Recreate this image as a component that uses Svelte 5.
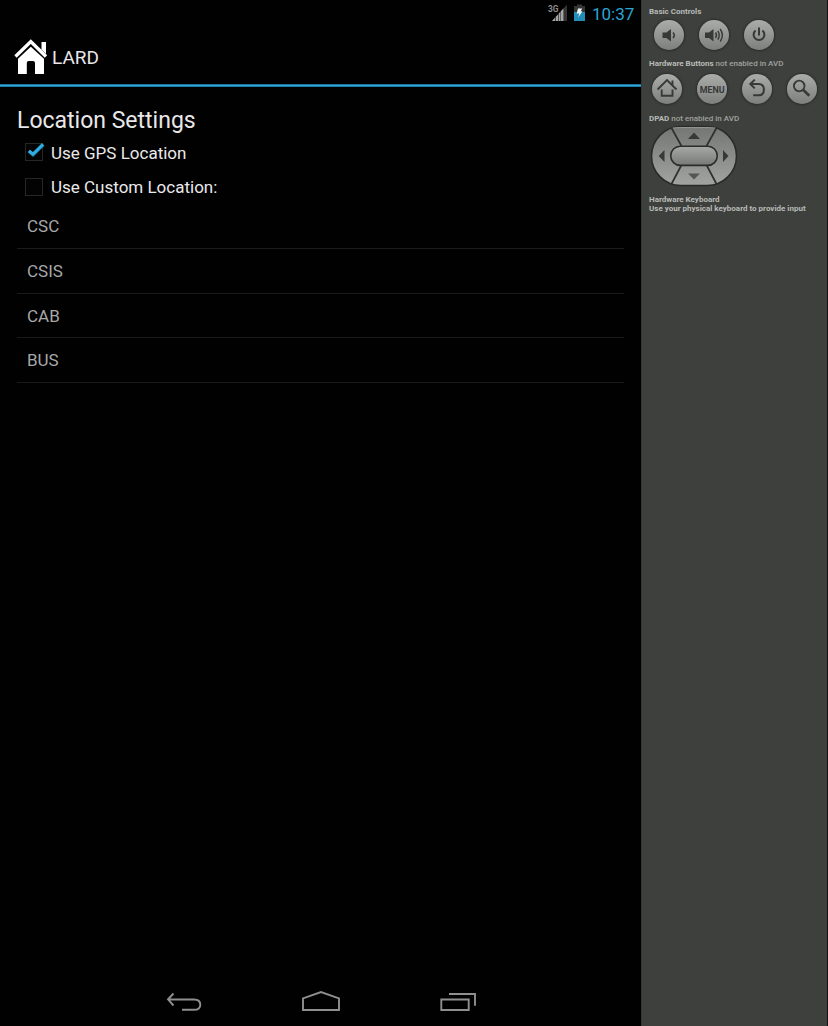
<script>
  const places = ['CSC', 'CSIS', 'CAB', 'BUS'];
  let gps = $state(true);
  let custom = $state(false);
</script>

{#snippet check(on)}
  <svg class="check" width="24" height="24" viewBox="0 0 24 24">
    <rect x="3.5" y="3.5" width="17" height="17" fill="#020302" stroke="#252725" />
    {#if on}
      <path class="glow" d="M6.8 11 L11 14.6 L21.2 4.4" fill="none" stroke="#1583b4" stroke-width="3.6" />
      <path d="M7 10.9 L11 14.2 L21 4.2" fill="none" stroke="#31aee0" stroke-width="2.8" />
    {/if}
  </svg>
{/snippet}

<div class="screen">
  <main class="device">
    <div class="status">
      <svg width="42" height="28" viewBox="0 0 42 28">
        <text class="net" x="1" y="12" textLength="10.5" lengthAdjust="spacingAndGlyphs">3G</text>
        <path d="M5 21 L20 4.5 V21 Z" fill="#343434" />
        <path d="M5 21 L8 17.7 V21 Z M8.8 21 V16.8 L11 14.4 V21 Z M11.8 21 V13.5 L13.2 12 V21 Z M13.8 21 V11.3 L16.4 8.5 V21 Z" fill="#a5a5a5" />
        <path d="M27 6 H30 V4.5 H35 V6 H38 V12 H27 Z" fill="#343634" />
        <path d="M27 12 H38 V21 H27 Z" fill="#238db8" />
        <path d="M31 8.5 H35.2 L33.7 11.2 H35.5 L31.2 17.5 L32.3 13.5 H29.7 Z" fill="#eef5f7" />
      </svg>
      <span class="clock">10:37</span>
    </div>
    <header>
      <svg width="34" height="36" viewBox="0 0 34 36">
        <path d="M27.5 3 H32 V15 L27.5 10.5 Z" fill="#fff" />
        <path d="M1.5 17.5 L16.8 2.6 L32 17.5" fill="none" stroke="#fff" stroke-width="3.4" />
        <path d="M4 35 V19.7 L16.8 7.7 L30 19.7 V35 H21 V24 Q21 22 19 22 H14.8 Q12.8 22 12.8 24 V35 Z" fill="#fff" />
      </svg>
      <span class="title">LARD</span>
    </header>
    <div class="rule"></div>
    <section class="content">
      <h1>Location Settings</h1>
      <button class="option" onclick={() => (gps = !gps)}>{@render check(gps)}<span>Use GPS Location</span></button>
      <button class="option second" onclick={() => (custom = !custom)}>{@render check(custom)}<span>Use Custom Location:</span></button>
      <ul>
        {#each places as place}
          <li>{place}</li>
        {/each}
      </ul>
    </section>
    <nav>
      <svg width="40" height="24" viewBox="0 0 40 24">
        <path d="M9.5 3.5 L4 9.3 L9.5 15.5 M4.5 9.5 H30 Q36.3 9.5 36.3 14.7 Q36.3 19.8 30 19.8 H18" />
      </svg>
      <svg width="40" height="24" viewBox="0 0 40 24">
        <path d="M2 20 V8.3 L20 2 L38 8.3 V20 Z" />
      </svg>
      <svg width="40" height="24" viewBox="0 0 40 24">
        <path d="M3.3 9.5 H30.7 V20 H3.3 Z M11 4 H37 V15.8" />
      </svg>
    </nav>
  </main>

  <aside>
    <div class="label l1"><b>Basic Controls</b></div>
    <div class="keys basic">
      <div class="key"><svg viewBox="0 0 30 30">
        <path d="M8.5 12.5 H12.3 L17 9 V21.5 L12.3 18 H8.5 Z" fill="#373937" />
        <path d="M19 12.5 Q21.5 15.3 19 18" fill="none" stroke="#373937" stroke-width="1.6" />
      </svg></div>
      <div class="key"><svg viewBox="0 0 30 30">
        <path d="M6 12.5 H10 L14.5 9 V21.5 L10 18 H6 Z" fill="#373937" />
        <path d="M16.5 12.5 Q18.5 15.3 16.5 18 M18.8 10.8 Q21.7 15.3 18.8 19.7 M21.2 9 Q25.6 15.3 21.2 21.5" fill="none" stroke="#373937" stroke-width="1.4" />
      </svg></div>
      <div class="key"><svg viewBox="0 0 30 30">
        <path d="M11.6 10.5 A5.4 5.4 0 1 0 18.4 10.5 M15 7.5 V15.5" fill="none" stroke="#373937" stroke-width="2" />
      </svg></div>
    </div>
    <div class="label l2"><b>Hardware Buttons</b> not enabled in AVD</div>
    <div class="keys hardware">
      <div class="key"><svg viewBox="0 0 30 30">
        <path d="M5.6 15.5 L15 6 L24.5 15.5 M20.5 11 V6.5 M9.7 15.5 V21.8 H20.5 V15.5" fill="none" stroke="#373937" stroke-width="1.9" />
      </svg></div>
      <div class="key"><svg viewBox="0 0 30 30"><text class="menu" x="2.7" y="18.6" textLength="25" lengthAdjust="spacingAndGlyphs">MENU</text></svg></div>
      <div class="key"><svg viewBox="0 0 30 30">
        <path d="M12.8 5.6 L8.3 10 L12.8 14.4 M8.8 10 H16.5 Q21.9 10 21.9 15.6 Q21.9 21.3 16.5 21.3 H11.2" fill="none" stroke="#373937" stroke-width="2" />
      </svg></div>
      <div class="key"><svg viewBox="0 0 30 30">
        <circle cx="12.2" cy="12" r="5.3" fill="none" stroke="#373937" stroke-width="1.8" />
        <path d="M15.8 15.5 L22.3 21.8" fill="none" stroke="#373937" stroke-width="2.6" />
      </svg></div>
    </div>
    <div class="label l3"><b>DPAD</b> not enabled in AVD</div>
    <svg class="dpad" width="88" height="62" viewBox="0 0 88 62">
      <defs>
        <linearGradient id="pad" x1="0" y1="0" x2="0" y2="1"><stop offset="0" stop-color="#747674" /><stop offset="1" stop-color="#a2a4a2" /></linearGradient>
        <linearGradient id="mid" x1="0" y1="0" x2="0" y2="1"><stop offset="0" stop-color="#a7a9a7" /><stop offset="1" stop-color="#777977" /></linearGradient>
      </defs>
      <rect x="1.5" y="1.5" width="85" height="59" rx="29.5" fill="url(#pad)" stroke="#292b29" stroke-width="1.6" />
      <path d="M22.5 3 Q26 2.6 30 2.6 H58 Q62 2.6 65.5 3" fill="none" stroke="#a4a6a4" stroke-width=".8" />
      <path d="M21.2 2.5 L31.5 21 M66.8 2.5 L56.5 21 M21.2 59.5 L31.5 40 M66.8 59.5 L56.5 40" stroke="#2f312f" stroke-width="1.7" />
      <rect x="20.7" y="21.2" width="46.6" height="19.2" rx="9.6" fill="url(#mid)" stroke="#2b2d2b" stroke-width="1.6" />
      <path d="M44 7.5 L50 14 H38 Z M8.7 31 L14.5 25 V37 Z M78.5 31 L73 25 V37 Z" fill="#373937" />
      <path d="M38 48.4 H50 L44 54.5 Z" fill="#555755" />
    </svg>
    <div class="label l4"><b>Hardware Keyboard</b></div>
    <div class="label l5"><b>Use your physical keyboard to provide input</b></div>
  </aside>
</div>

<style>
  :global(body) { margin: 0; background: #000; }
  .screen { display: flex; width: 828px; height: 1026px; overflow: hidden; font-family: Roboto, sans-serif; background: #000; }
  svg { display: block; flex: none; }
  .device { width: 641px; display: flex; flex-direction: column; background: #000100; }
  .status { height: 28px; display: flex; justify-content: flex-end; padding-right: 7px; box-sizing: border-box; }
  .clock { width: 42px; margin-left: 3px; font-size: 17px; line-height: 28px; color: #2ca6d6; white-space: nowrap; }
  .net { font: bold 9px Roboto, sans-serif; fill: #8c8c8c; }
  header { height: 56px; box-sizing: border-box; display: flex; align-items: center; padding: 2px 0 0 14px; color: #e8e6ea; }
  .rule { height: 3px; background: linear-gradient(#1a7199 33.3%, #31aadb 33.3% 66.6%, #1a7ca8 66.6%); }
  .title { font-size: 19px; margin: 0 0 0 4px; }
  .content { flex: 1; padding: 20px 17px 0; display: flex; flex-direction: column; }
  h1 { font-size: 23px; line-height: 28px; font-weight: 400; margin: 0; color: #e9e7e9; }
  .option { display: flex; align-items: center; gap: 5px; height: 34px; padding: 0 0 0 5px; margin: 0; border: 0; background: none; font: 17px Roboto, sans-serif; color: #ebe9eb; text-align: left; }
  .option span { padding-top: 2px; }
  .second { height: 35px; }
  .second span { padding-top: 0; }
  ul { list-style: none; margin: 0; padding: 0; }
  li { height: 44.75px; box-sizing: border-box; border-bottom: 1px solid #191b19; padding-left: 10px; font-size: 17px; line-height: 45px; color: #a9a8a9; }
  nav { height: 48px; display: flex; gap: 97px; padding: 12px 0 0 164px; box-sizing: border-box; }
  nav path { fill: none; stroke: #8f8f8f; stroke-width: 1.9; }
  aside { width: 187px; box-sizing: border-box; background: #3e403d; border-left: 1px solid #353734; border-right: 1px solid #111211; padding: 7px 0 0 7px; color: #a0a29f; }
  .label { font-size: 8px; font-weight: 500; line-height: 9px; height: 9px; white-space: nowrap; }
  .label b { color: #b8bab7; font-weight: 700; }
  .keys { display: flex; gap: 15px; }
  .basic { padding: 4px 0 0 5px; height: 39px; }
  .hardware { padding: 6px 0 0 3px; height: 34px; }
  .key { width: 30px; height: 30px; border-radius: 50%; background: linear-gradient(#aaacaa, #7d7f7d); box-shadow: 0 0 2px 1px #2b2d2b; }
  .menu { font: bold 9.5px Roboto, sans-serif; fill: #373937; }
  .l3 { margin-top: 6px; }
  .dpad { margin: 2px 0 0 1px; }
  .l4 { margin-top: 8px; }
</style>
